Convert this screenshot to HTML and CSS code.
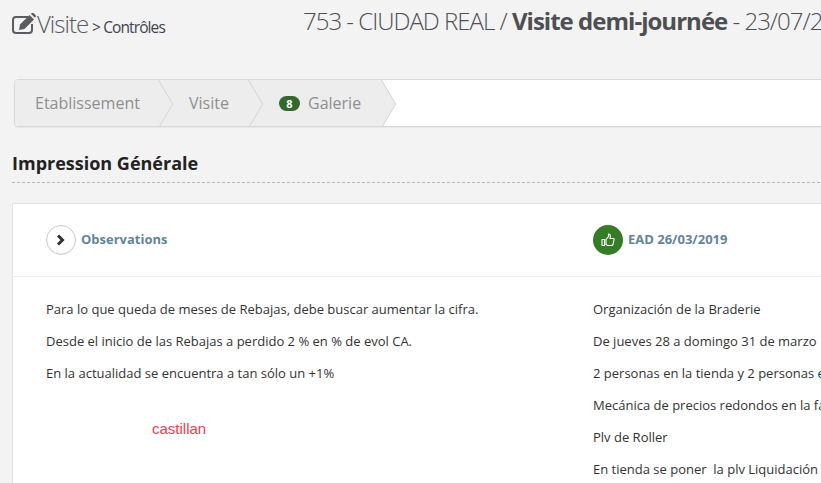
FILE: index.html
```html
<!DOCTYPE html>
<html lang="fr">
<head>
<meta charset="utf-8">
<title>Visite</title>
<link rel="stylesheet" href="styles.css">
</head>
<body>
<div class="page">
  <header class="top">
    <div class="crumb">
      <svg class="edit-icon" width="26" height="22" viewBox="0 0 26 22">
        <path d="M16 4H4Q1 4 1 7V17Q1 20 4 20H17Q20 20 20 17V11" fill="none" stroke="#5a5c5f" stroke-width="2"/>
        <path d="M8 11.500L17.500 2L22 6.500L12.500 16L7 17Z" fill="#5a5c5f"/>
        <path d="M18.800 .8L20 0Q21 -.5 22 .5L23.500 2Q24.300 3 23.500 4L23 4.800Z" fill="#5a5c5f"/>
      </svg>
      <span class="crumb-main">Visite</span>
      <span class="crumb-sub">&gt; Contrôles</span>
    </div>
    <h1 class="title">753 - CIUDAD REAL / <strong>Visite demi-journée</strong> - 23/07/2019</h1>
  </header>

  <nav class="steps">
    <div class="step step-1">Etablissement</div>
    <div class="step step-2">Visite</div>
    <div class="step step-3"><span class="badge">8</span>Galerie</div>
  </nav>

  <h2 class="section">Impression Générale</h2>

  <section class="card">
    <div class="card-head">
      <div class="col-head col-left">
        <span class="round round-light">
          <svg width="10" height="12" viewBox="0 0 10 12"><path d="M2 1.500L6.500 6L2 10.500" fill="none" stroke="#333" stroke-width="3"/></svg>
        </span>
        <span class="head-label">Observations</span>
      </div>
      <div class="col-head">
        <span class="round round-green">
          <svg width="14" height="14" viewBox="0 0 14 14"><path d="M1 6.500H3.500V12.500H1ZM5 6.500L7.500 3.500V1Q9.500 1 9.300 3.500L9 5.500H12.500Q13.500 5.700 13 7L12 11.500Q11.700 12.500 10.500 12.500H6.500L5 11.500Z" fill="none" stroke="#fff" stroke-width="1.100"/></svg>
        </span>
        <span class="head-label">EAD 26/03/2019</span>
      </div>
    </div>
    <div class="card-body">
      <div class="col-left text-col">
        <p>Para lo que queda de meses de Rebajas, debe buscar aumentar la cifra.</p>
        <p>Desde el inicio de las Rebajas a perdido 2 % en % de evol CA.</p>
        <p>En la actualidad se encuentra a tan sólo un +1%</p>
        <p class="note">castillan</p>
      </div>
      <div class="text-col">
        <p>Organización de la Braderie</p>
        <p>De jueves 28 a domingo 31 de marzo</p>
        <p>2 personas en la tienda y 2 personas en la calle</p>
        <p>Mecánica de precios redondos en la fachada</p>
        <p>Plv de Roller</p>
        <p>En tienda se poner&nbsp; la plv Liquidación</p>
      </div>
    </div>
  </section>
</div>
</body>
</html>
```
FILE: styles.css
```css
* { box-sizing: border-box; }
html, body { margin: 0; height: 100%; overflow: hidden; }
body {
  background: #f3f3f3;
  font-family: "Open Sans", sans-serif;
  color: #333;
}
.page { width: 1300px; padding: 0 0 0 12px; }
.top { display: flex; height: 79px; align-items: flex-start; }
.crumb { display: flex; align-items: baseline; width: 291px; padding-top: 8px; white-space: nowrap; }
.edit-icon { align-self: flex-start; margin-top: 5px; margin-right: -1px; }
.crumb-main { font-size: 24px; font-weight: 300; letter-spacing: -1px; line-height: 32px; color: #565a60; }
.crumb-sub { font-size: 15.5px; font-weight: 400; letter-spacing: -.9px; margin-left: 4px; color: #3f4450; }
.title { margin: 0; padding-top: 4px; font-size: 24px; line-height: 33px; font-weight: 300; letter-spacing: -1px; white-space: nowrap; color: #4d4f53; }
.title strong { font-weight: 700; letter-spacing: -.98px; }
.steps {
  display: flex; height: 48px; margin-left: 2px; background: #fff;
  border: 1px solid #d9d9d9; border-radius: 4px; overflow: hidden;
  box-shadow: 0 1px 1px rgba(0,0,0,.05);
}
.step {
  display: flex; align-items: center; background: #ededed; color: #8f8f8f;
  font-size: 16px; height: 46px; position: relative;
}
.step::after {
  content: ""; position: absolute; z-index: 1; top: 6.75px; right: -16.25px; width: 32.500px; height: 32.500px;
  transform: scaleX(.6) rotate(45deg);
  background: #ededed; border-top: 1px solid #cfcfcf; border-right: 1px solid #cfcfcf;
}
.step-1 { width: 144px; padding-left: 20px; }
.step-2 { width: 90px; padding-left: 30px; }
.step-3 { width: 133px; padding-left: 30px; }
.badge {
  display: inline-flex; align-items: center; justify-content: center;
  width: 21px; height: 15px; border-radius: 8px; margin-right: 8px; margin-top: 1px;
  background: #33692f; color: #fff; font-size: 11px; font-weight: 700;
}
.section {
  margin: 0; height: 56px; padding-top: 24px; font-size: 18px; line-height: 24px; font-weight: 700;
  color: #222; border-bottom: 1px dashed #bbb;
}
.card { margin-top: 20px; background: #fff; border: 1px solid #e2e2e2; border-radius: 2px; }
.card-head { display: flex; height: 73px; border-bottom: 1px solid #ececec; }
.col-left { width: 580px; padding-left: 33px; flex: none; }
.col-head { display: flex; align-items: center; gap: 5px; }
.round { width: 30px; height: 30px; border-radius: 50%; display: flex; align-items: center; justify-content: center; flex: none; }
.round-light { background: #fff; border: 1px solid #ccc; box-shadow: inset 0 -1px 2px rgba(0,0,0,.08); }
.round-green { background: #347d25; }
.head-label { font-size: 13px; line-height: 18px; margin-top: -2px; font-weight: 700; color: #5f8699; }
.card-body { display: flex; padding-top: 23px; }
.text-col p { margin: 0 0 14px; font-size: 13px; line-height: 18px; color: #333; white-space: nowrap; }
.text-col .note { margin: 38px 0 0 106px; font-family: "Liberation Sans", sans-serif; font-size: 15px; color: #f33a4e; }
```
